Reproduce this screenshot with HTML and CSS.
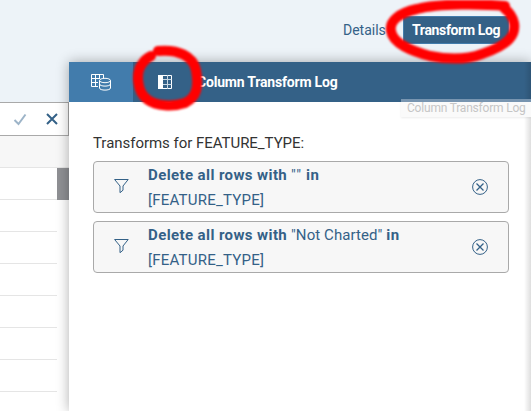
FILE: index.html
```html
<!DOCTYPE html>
<html lang="en">
<head>
<meta charset="utf-8">
<title>Column Transform Log</title>
<link rel="stylesheet" href="styles.css">
</head>
<body>
<div class="app">
  <header class="toolbar">
    <span class="details">Details</span>
    <span class="log-button"><span class="log-label">Transform Log</span></span>
  </header>
  <main class="workspace">
    <section class="grid">
      <div class="grid-top"></div>
      <div class="formula">
        <svg width="14" height="13" viewBox="0 0 14 13"><path d="M1.5 7 5.5 11 12.5 1.5" fill="none" stroke="#9db4c8" stroke-width="2"/></svg>
        <svg width="12" height="12" viewBox="0 0 12 12"><path d="M1 1 11 11M11 1 1 11" stroke="#346187" stroke-width="2"/></svg>
      </div>
      <div class="grid-head"></div>
      <div class="grid-body">
        <div class="rows"><i></i><i></i><i></i><i></i><i></i><i></i><i></i><i></i></div>
        <div class="thumb"></div>
      </div>
    </section>
    <section class="panel">
      <nav class="tabs">
        <div class="tab">
          <svg width="20" height="17" viewBox="0 0 20 17" fill="none" stroke="#fff" stroke-width="1"><path d="M7 12.5H.5V.5H12.5V4M.5 4.5H9M.5 8.5H7M4.5.5V12.5M8.5.5V5"/><ellipse cx="14" cy="6.5" rx="5.5" ry="2.2"/><path d="M8.5 6.5V14C8.5 16.8 19.5 16.8 19.5 14V6.5M8.5 10C8.5 12.8 19.5 12.8 19.5 10"/></svg>
        </div>
        <div class="tab active">
          <svg width="14" height="14" viewBox="0 0 14 14"><path d="M0 0H5V14H0Z" fill="#fff"/><path d="M5 .5H13.5V13.5H5" fill="none" stroke="#fff"/><path d="M5 4.5H13.5M5 9.5H13.5M9.5 0V14" fill="none" stroke="#c8d6e2"/></svg>
        </div>
        <span class="panel-title">Column Transform Log</span>
      </nav>
      <div class="content">
        <div class="caption">Transforms for FEATURE_TYPE:</div>
        <div class="card">
          <svg class="funnel" width="15" height="15" viewBox="0 0 15 15"><path d="M.6.5H14.2L9 7V11.2L6 13.7V7Z" fill="none" stroke="#346187"/></svg>
          <div class="card-text"><div class="line"><b>Delete all rows with</b> <span class="empty">""</span> <b>in</b></div><div class="line feature">[FEATURE_TYPE]</div></div>
          <svg class="remove" width="16" height="16" viewBox="0 0 16 16" fill="none" stroke="#346187"><circle cx="8" cy="8" r="7.4"/><path d="M4.5 4.5 11.5 11.5M11.5 4.5 4.5 11.5" stroke-width="1.3"/></svg>
        </div>
        <div class="card">
          <svg class="funnel" width="15" height="15" viewBox="0 0 15 15"><path d="M.6.5H14.2L9 7V11.2L6 13.7V7Z" fill="none" stroke="#346187"/></svg>
          <div class="card-text"><div class="line"><b>Delete all rows with</b> "Not Charted" <b>in</b></div><div class="line feature">[FEATURE_TYPE]</div></div>
          <svg class="remove" width="16" height="16" viewBox="0 0 16 16" fill="none" stroke="#346187"><circle cx="8" cy="8" r="7.4"/><path d="M4.5 4.5 11.5 11.5M11.5 4.5 4.5 11.5" stroke-width="1.3"/></svg>
        </div>
      </div>
    </section>
  </main>
  <div class="tooltip">Column Transform Log</div>
  <svg class="marks" width="531" height="411" viewBox="0 0 531 411" fill="none" stroke="#f00" stroke-linecap="round" stroke-linejoin="round">
    <path stroke-width="10" d="M505 6C484 4 439 3 417 9C399 13 389 21 391 31C393 44 412 51 430 56C450 60 466 60 482 54C509 45 516 35 514 23Q512 14 504 8"/>
    <path stroke-width="10" d="M158 51C178 49 193 56 196 70C199 87 197 97 185 103C173 107 156 106 148 100C136 92 136 72 142 64Q145 59 151 56"/>
  </svg>
</div>
</body>
</html>
```
FILE: styles.css
```css
* { box-sizing: border-box; }
body { margin: 0; font-family: Roboto, "Liberation Sans", sans-serif; font-size: 15px; color: #346187; }
svg { display: block; flex: none; }
.app { position: relative; width: 531px; height: 411px; overflow: hidden; background: #edf3f8; display: flex; flex-direction: column; }
.toolbar { height: 62px; flex: none; display: flex; align-items: flex-start; padding: 16px 0 0 343px; }
.details { width: 60px; line-height: 28px; font-size: 14px; }
.log-button { width: 106px; height: 28px; background: #346187; border: 1px solid #427cac; color: #fff; font-weight: 700; font-size: 14px; line-height: 26px; padding-left: 8px; white-space: nowrap; letter-spacing: -.35px; }
.workspace { flex: 1; display: flex; min-height: 0; }
.grid { width: 69px; background: #fff; }
.grid-top { height: 40px; background: #edf3f8; }
.formula { height: 34px; border: 1px solid #a9a9a9; border-left: 0; display: flex; align-items: center; gap: 19px; padding-left: 13px; }
.grid-head { height: 32px; background: #f7f7f7; border-bottom: 1px solid #e5e5e5; }
.grid-body { display: flex; }
.rows { width: 57px; }
.rows i { display: block; height: 32px; border-bottom: 1px solid #e5e5e5; }
.thumb { width: 12px; height: 32px; background: #8f9094; }
.panel { position: relative; width: 462px; background: #fff; box-shadow: 0 0 12px rgba(0, 0, 0, .32); }
.panel::after { content: ""; position: absolute; top: 0; right: 0; width: 7px; height: 349px; background: linear-gradient(90deg, transparent, rgba(0, 0, 0, .13)); }
.tabs { height: 40px; display: flex; align-items: center; background: #346187; }
.tab { width: 64px; height: 40px; background: #427cac; display: flex; align-items: center; justify-content: center; }
.active { background: #346187; }
.panel-title { color: #fff; font-weight: 700; font-size: 14px; white-space: nowrap; letter-spacing: -.2px; }
.content { padding: 29px 22px 0 24px; }
.caption { color: #333; height: 24px; line-height: 24px; margin-bottom: 6px; white-space: nowrap; letter-spacing: -.03px; }
.card { height: 52px; border: 1px solid #a9a9a9; border-radius: 4px; background: #f7f7f7; display: flex; align-items: center; padding: 0 20px; margin-bottom: 8px; }
.funnel { margin: -2px 19px 0 0; }
.card-text { flex: 1; white-space: nowrap; padding-top: 2px; }
.line { line-height: 25px; letter-spacing: .08px; }
.line b { letter-spacing: .4px; }
.line .empty { letter-spacing: 1.2px; }
.line.feature { letter-spacing: .23px; }
.tooltip { position: absolute; left: 401px; top: 99px; width: 130px; height: 18px; padding-left: 6px; line-height: 18px; font-size: 12px; letter-spacing: -.2px; color: #c6c6c6; background: linear-gradient(#7895b0 0 3px, #fafafa 3px); box-shadow: 0 1px 2px rgba(0, 0, 0, .08); white-space: nowrap; }
.marks { position: absolute; left: 0; top: 0; filter: blur(.8px); }
```
